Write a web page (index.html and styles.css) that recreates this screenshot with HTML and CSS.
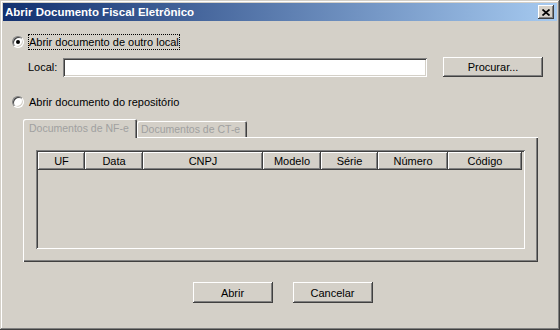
FILE: index.html
```html
<!DOCTYPE html>
<html lang="pt">
<head>
  <meta charset="UTF-8">
  <title>Abrir Documento Fiscal Eletrônico</title>
  <link rel="stylesheet" href="styles.css">
</head>
<body>

  <div class="window">
    <div class="titlebar">
      <span class="title">Abrir Documento Fiscal Eletrônico</span>
      <span class="close-btn">
        <svg width="8" height="7" viewBox="0 0 8 7">
          <path d="M0.5 0.5 L7.5 6.5 M7.5 0.5 L0.5 6.5" stroke="#000" stroke-width="1.7" fill="none"/>
        </svg>
      </span>
    </div>

    <div class="content">
      <div class="option">
        <span class="radio checked"></span>
        <span class="label focus">Abrir documento de outro local</span>
      </div>

      <div class="local-row">
        <span class="local-label">Local:</span>
        <div class="field"></div>
        <div class="btn browse">Procurar...</div>
      </div>

      <div class="option second">
        <span class="radio"></span>
        <span class="label">Abrir documento do repositório</span>
      </div>

      <div class="tabs">
        <div class="tab active">Documentos de NF-e</div>
        <div class="tab">Documentos de CT-e</div>
      </div>

      <div class="tab-panel">
        <div class="list">
          <div class="list-header">
            <div class="col col-uf">UF</div>
            <div class="col col-data">Data</div>
            <div class="col col-cnpj">CNPJ</div>
            <div class="col col-modelo">Modelo</div>
            <div class="col col-serie">Série</div>
            <div class="col col-numero">Número</div>
            <div class="col col-codigo">Código</div>
          </div>
        </div>
      </div>

      <div class="actions">
        <div class="btn">Abrir</div>
        <div class="btn">Cancelar</div>
      </div>
    </div>
  </div>

</body>
</html>
```

FILE: styles.css
```css
body {
  margin: 0;
  background-color: #d4d0c8;
  font-family: 'Liberation Sans', Arial, sans-serif;
  font-size: 11px;
  color: #000;
}

.window {
  width: 560px;
  height: 330px;
  box-sizing: border-box;
  padding: 3px;
  background-color: #d4d0c8;
  box-shadow: inset -1px -1px #404040, inset 1px 1px #d4d0c8,
              inset -2px -2px #808080, inset 2px 2px #fff;
}

.titlebar {
  height: 18px;
  display: flex;
  align-items: center;
  justify-content: space-between;
  padding: 0 3px 0 2px;
  background: linear-gradient(to right, #12306f, #a6caf0);
}

.title {
  color: #fff;
  font-weight: bold;
  font-size: 11.5px;
}

.close-btn {
  width: 16px;
  height: 14px;
  box-sizing: border-box;
  display: flex;
  align-items: center;
  justify-content: center;
  background-color: #d4d0c8;
  box-shadow: inset -1px -1px #404040, inset 1px 1px #fff,
              inset -2px -2px #808080;
}

.content {
  padding-left: 9px;
}

.option {
  display: flex;
  align-items: center;
  height: 16px;
  margin-top: 13px;
}

.option.second {
  margin-top: 17px;
}

.radio {
  width: 12px;
  height: 12px;
  box-sizing: border-box;
  border-radius: 50%;
  background-color: #fff;
  border: 1px solid;
  border-color: #808080 #fff #fff #808080;
  box-shadow: inset 1px 1px #404040, inset -1px -1px #d4d0c8;
  display: flex;
  align-items: center;
  justify-content: center;
  margin-right: 4px;
}

.radio.checked::after {
  content: "";
  width: 4px;
  height: 4px;
  border-radius: 50%;
  background-color: #000;
}

.label {
  padding: 1px 0 1px 0;
  border: 1px solid transparent;
}

.label.focus {
  border: 1px dotted #000;
}

.local-row {
  display: flex;
  align-items: center;
  margin-top: 7px;
  padding-left: 16px;
}

.local-label {
  width: 35px;
}

.field {
  width: 364px;
  height: 19px;
  box-sizing: border-box;
  background-color: #fff;
  box-shadow: inset 1px 1px #808080, inset -1px -1px #fff,
              inset 2px 2px #404040, inset -2px -2px #d4d0c8;
  margin-right: 16px;
}

.btn {
  width: 80px;
  height: 21px;
  box-sizing: border-box;
  display: flex;
  align-items: center;
  justify-content: center;
  background-color: #d4d0c8;
  box-shadow: inset -1px -1px #404040, inset 1px 1px #fff,
              inset -2px -2px #808080;
}

.btn.browse {
  width: 100px;
  height: 20px;
}

.tabs {
  display: flex;
  align-items: flex-end;
  height: 18px;
  margin-top: 9px;
  padding-left: 11px;
}

.tab {
  height: 16px;
  box-sizing: border-box;
  padding: 2px 0 0 4px;
  font-size: 10.5px;
  white-space: nowrap;
  overflow: hidden;
  color: #a0a0a0;
  background-color: #d4d0c8;
  border-radius: 2px 2px 0 0;
  box-shadow: inset 1px 1px #fff, inset -1px 0 #404040, inset -2px 0 #808080;
}

.tab.active {
  width: 114px;
  height: 19px;
  padding-left: 6px;
  padding-top: 3px;
  position: relative;
  z-index: 1;
  margin-bottom: -1px;
}

.tab:not(.active) {
  width: 110px;
}

.tab-panel {
  width: 515px;
  height: 125px;
  box-sizing: border-box;
  margin-left: 11px;
  padding: 13px 0 0 13px;
  box-shadow: inset 1px 1px #fff, inset -1px -1px #404040,
              inset -2px -2px #808080;
}

.list {
  width: 489px;
  height: 99px;
  box-sizing: border-box;
  padding: 2px;
  box-shadow: inset 1px 1px #808080, inset -1px -1px #fff,
              inset 2px 2px #404040, inset -2px -2px #d4d0c8;
}

.list-header {
  display: flex;
  height: 18px;
}

.col {
  box-sizing: border-box;
  display: flex;
  align-items: center;
  justify-content: center;
  box-shadow: inset -1px -1px #404040, inset 1px 1px #fff,
              inset -2px -2px #808080;
}

.col-uf { width: 47px; }
.col-data { width: 58px; }
.col-cnpj { width: 120px; }
.col-modelo { width: 58px; }
.col-serie { width: 57px; }
.col-numero { width: 70px; }
.col-codigo { width: 74px; }

.actions {
  display: flex;
  justify-content: center;
  gap: 20px;
  margin-top: 20px;
  padding-right: 4px;
}
```
